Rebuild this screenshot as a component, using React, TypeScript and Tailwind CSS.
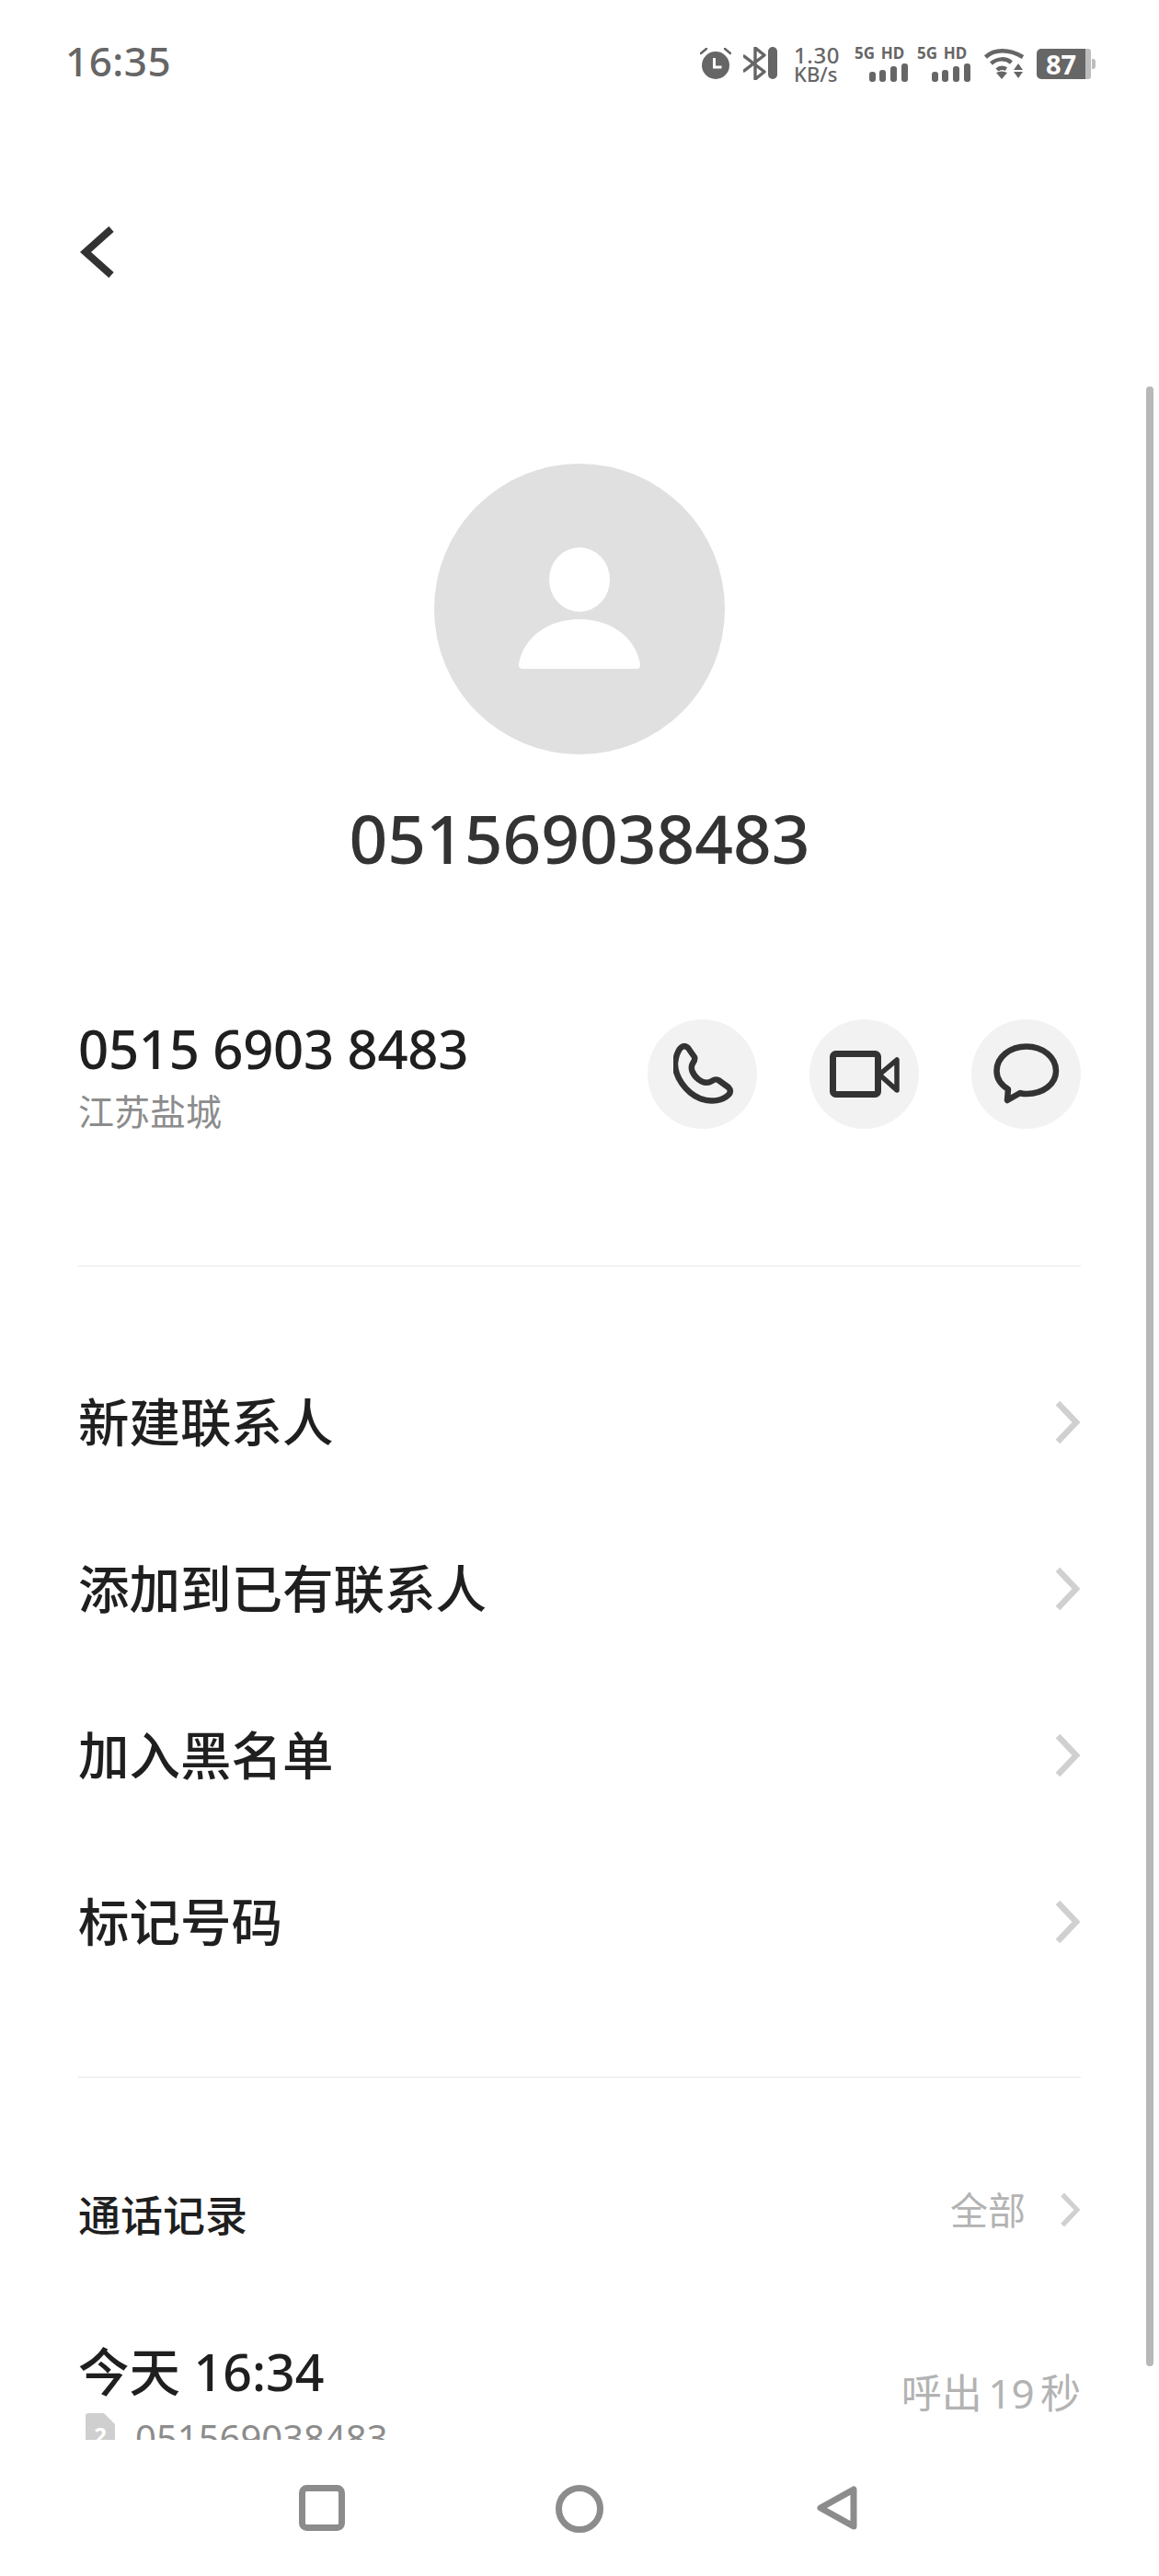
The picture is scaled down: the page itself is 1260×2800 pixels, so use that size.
import React from 'react';

const FONT = "[font-family:'Noto_Sans','Noto_Sans_CJK_SC',sans-serif]";

const SignalGroup: React.FC = () => (
  <div className="flex w-[58px] flex-col">
    <span className="h-[15px] whitespace-nowrap text-[17px] font-bold leading-[15px] tracking-[0.1px] text-[#666] [word-spacing:2px]">5G HD</span>
    <svg className="mt-[4px] self-end" width="42" height="20" viewBox="0 0 42 20" fill="#666">
      <rect x="0" y="9" width="7" height="11" rx="3" />
      <rect x="11" y="7" width="7" height="13" rx="3" />
      <rect x="23" y="3" width="7" height="17" rx="3" />
      <rect x="35" y="0" width="7" height="20" rx="3" />
    </svg>
  </div>
);

const StatusBar: React.FC = () => (
  <div className="flex h-[40px] items-center justify-between pl-[71px] pr-[69px] text-[#666]">
    <span className="mb-[6px] text-[44px] font-medium leading-[40px] tracking-[0.5px]">16:35</span>
    <div className="flex items-center">
      <svg width="34" height="34" viewBox="0 0 34 34" fill="none">
        <circle cx="17" cy="19" r="15" fill="#666" />
        <path d="M15.5 11v10h8" stroke="#fff" strokeWidth="3" />
        <path d="M1 6l6-5M33 6l-6-5" stroke="#666" strokeWidth="2.5" strokeLinecap="round" />
      </svg>
      <svg className="ml-[13px]" width="38" height="36" viewBox="0 0 38 36" fill="none">
        <path d="M1 10l22 17-10 8V1l10 8L1 26" stroke="#666" strokeWidth="3.4" strokeLinejoin="round" strokeLinecap="round" />
        <rect x="27" y="0" width="10" height="35" rx="5" fill="#666" />
      </svg>
      <div className="ml-[17px] flex w-[52px] flex-col items-start font-medium">
        <span className="h-[22px] text-[24px] leading-[22px] tracking-[0.6px]">1.30</span>
        <span className="text-[22px] leading-[18px]">KB/s</span>
      </div>
      <div className="ml-[14px]"><SignalGroup /></div>
      <div className="ml-[10px]"><SignalGroup /></div>
      <svg className="ml-[15px]" width="44" height="34" viewBox="0 0 44 34" fill="none">
        <path d="M1.5 10C11 1 27 1 42 10M7.5 17c7-6 16-6 22-1M14 24c3-3 6-3 10-1" stroke="#666" strokeWidth="4.5" />
        <path d="M19 34l-6-7q6-3 12 0zM37 17l5 7H32zM32 26h10l-5 7z" fill="#666" />
      </svg>
      <svg className="ml-[13px]" width="64" height="33" viewBox="0 0 64 33">
        <path d="M53 0h3a3 3 0 0 1 3 3v27a3 3 0 0 1-3 3h-3z" fill="#bdbdbd" />
        <path d="M60 11h1a3 3 0 0 1 3 3v5a3 3 0 0 1-3 3h-1z" fill="#bdbdbd" />
        <path d="M5 0h48v33H5a5 5 0 0 1-5-5V5a5 5 0 0 1 5-5z" fill="#666" />
      </svg>
      <span className="ml-[-64px] w-[53px] text-center text-[29px] font-bold leading-[33px] text-white">87</span>
      <span className="w-[11px]" />
    </div>
  </div>
);

const Chevron: React.FC<{ big?: boolean }> = ({ big }) => (
  <svg width={big ? 30 : 24} height={big ? 48 : 38} viewBox="0 0 30 48" fill="none">
    <path d="M5 3l20 21L5 45" stroke="#d0d0d0" strokeWidth="6.5" />
  </svg>
);

const MenuRow: React.FC<{ label: string }> = ({ label }) => (
  <div className="flex h-[181.25px] items-center justify-between">
    <span className="text-[55.5px] font-medium leading-[70px] text-[#1f1f1f]">{label}</span>
    <Chevron big />
  </div>
);

const ActionButton: React.FC<{ children: React.ReactNode }> = ({ children }) => (
  <div className="flex h-[119px] w-[119px] items-center justify-center rounded-full bg-[#f2f2f2]">{children}</div>
);

const App: React.FC = () => {
  return (
    <div className={`relative flex h-[2800px] w-[1260px] flex-col overflow-hidden bg-white ${FONT}`}>
      <div className="h-[2652px] overflow-hidden pt-[49px]">
        <StatusBar />

        <div className="mt-[157px] pl-[85px]">
          <svg width="42" height="56" viewBox="0 0 42 56" fill="none">
            <path d="M36 3L8 28l28 25" stroke="#333" strokeWidth="8" />
          </svg>
        </div>

        <div className="mt-[202px] flex flex-col items-center">
          <div className="flex h-[316px] w-[316px] items-center justify-center rounded-full bg-[#e0e0e0]">
            <svg className="mb-[3px]" width="134" height="132" viewBox="0 0 134 132">
              <ellipse cx="67" cy="35" rx="33" ry="35" fill="#fff" />
              <path d="M1 127C6 97 34 78 67 78s61 19 66 49q1 5-5 5H6q-6 0-5-5z" fill="#fff" />
            </svg>
          </div>
          <h1 className="mt-[41px] text-[73px] font-medium leading-[100px] text-[#333]">051569038483</h1>
        </div>

        <div className="mt-[147px] flex items-start justify-between px-[85px]">
          <div className="flex flex-col">
            <span className="text-[58px] font-medium leading-[64px] tracking-[-0.3px] text-[#1f1f1f]">0515 6903 8483</span>
            <span className="mt-[12px] text-[39px] leading-[48px] text-[#8c8c8c]">江苏盐城</span>
          </div>
          <div className="flex gap-[57px]">
            <ActionButton>
              <svg className="ml-[3px]" width="66" height="68" viewBox="0 0 66 68" fill="none">
                <path d="M8 5c3-3 6-2 8 0l7 10c1 3 0 4-2 7-3 5 0 12 6 17 5 4 10 5 15 2 3-2 4-2 7-1l11 8c3 3 2 6 0 8-6 6-18 9-31 4C14 54 1 36 2 21 3 14 4 9 8 5z" stroke="#333" strokeWidth="6.5" strokeLinejoin="round" />
              </svg>
            </ActionButton>
            <ActionButton>
              <svg width="76" height="54" viewBox="0 0 76 54" fill="none">
                <rect x="3.5" y="4.5" width="49" height="44" rx="3" stroke="#333" strokeWidth="7" />
                <path d="M54 27l19-16v33z" stroke="#333" strokeWidth="5.5" strokeLinejoin="round" />
              </svg>
            </ActionButton>
            <ActionButton>
              <svg width="72" height="68" viewBox="0 0 72 68" fill="none">
                <path d="M36 3.500c18 0 32 12 32 26.500S54 55 36 55c-3 0-5 0-7-1L15 62l1-12C8 45 3.500 38 3.500 30 3.500 15 18 3.500 36 3.500z" stroke="#333" strokeWidth="6.500" strokeLinejoin="round" />
              </svg>
            </ActionButton>
          </div>
        </div>

        <div className="mx-[85px] mt-[143px] h-[2px] bg-[#f2f2f2]" />

        <div className="mt-[78px] px-[85px]">
          <MenuRow label="新建联系人" />
          <MenuRow label="添加到已有联系人" />
          <MenuRow label="加入黑名单" />
          <MenuRow label="标记号码" />
        </div>

        <div className="mx-[85px] mt-[77px] h-[2px] bg-[#f2f2f2]" />

        <div className="mt-[118px] flex h-[60px] items-center justify-between px-[85px]">
          <span className="text-[46px] font-medium leading-[60px] text-[#1f1f1f]">通话记录</span>
          <div className="mb-[10px] flex items-center gap-[36px]">
            <span className="text-[41px] leading-[50px] text-[#b3b3b3]">全部</span>
            <Chevron />
          </div>
        </div>

        <div className="mt-[106px] flex items-start justify-between px-[85px]">
          <div className="flex flex-col">
            <span className="text-[55.5px] font-medium leading-[70px] text-[#1f1f1f]">今天 16:34</span>
            <div className="mt-[12px] flex items-start gap-[22px]">
              <svg className="ml-[8px] mt-[-2px]" width="32" height="42" viewBox="0 0 32 42">
                <path d="M3 0h17l12 12v27a3 3 0 0 1-3 3H3a3 3 0 0 1-3-3V3a3 3 0 0 1 3-3z" fill="#cfcfcf" />
                <text x="16" y="33" fontSize="24" fontWeight="700" fill="#fff" textAnchor="middle">2</text>
              </svg>
              <span className="text-[40px] leading-[50px] text-[#8c8c8c]">051569038483</span>
            </div>
          </div>
          <span className="mt-[28px] text-[44px] leading-[60px] text-[#b3b3b3] [word-spacing:-5px]">呼出 19 秒</span>
        </div>
      </div>

      <div className="flex h-[148px] items-start pl-[325px] pt-[49px]">
        <svg width="50" height="50" viewBox="0 0 50 50" fill="none">
          <rect x="3.500" y="3.500" width="43" height="43" rx="5" stroke="#8c8c8c" strokeWidth="7" />
        </svg>
        <svg className="ml-[229px]" width="52" height="52" viewBox="0 0 52 52" fill="none">
          <circle cx="26" cy="26" r="22.500" stroke="#8c8c8c" strokeWidth="7" />
        </svg>
        <svg className="ml-[231px]" width="46" height="50" viewBox="0 0 46 50" fill="none">
          <path d="M41 5v40L5 25z" stroke="#8c8c8c" strokeWidth="7" strokeLinejoin="round" />
        </svg>
      </div>

      <div className="absolute left-[1246px] top-[420px] h-[2152px] w-[8px] rounded-full bg-[#b8b8b8]" />
    </div>
  );
};

export default App;
